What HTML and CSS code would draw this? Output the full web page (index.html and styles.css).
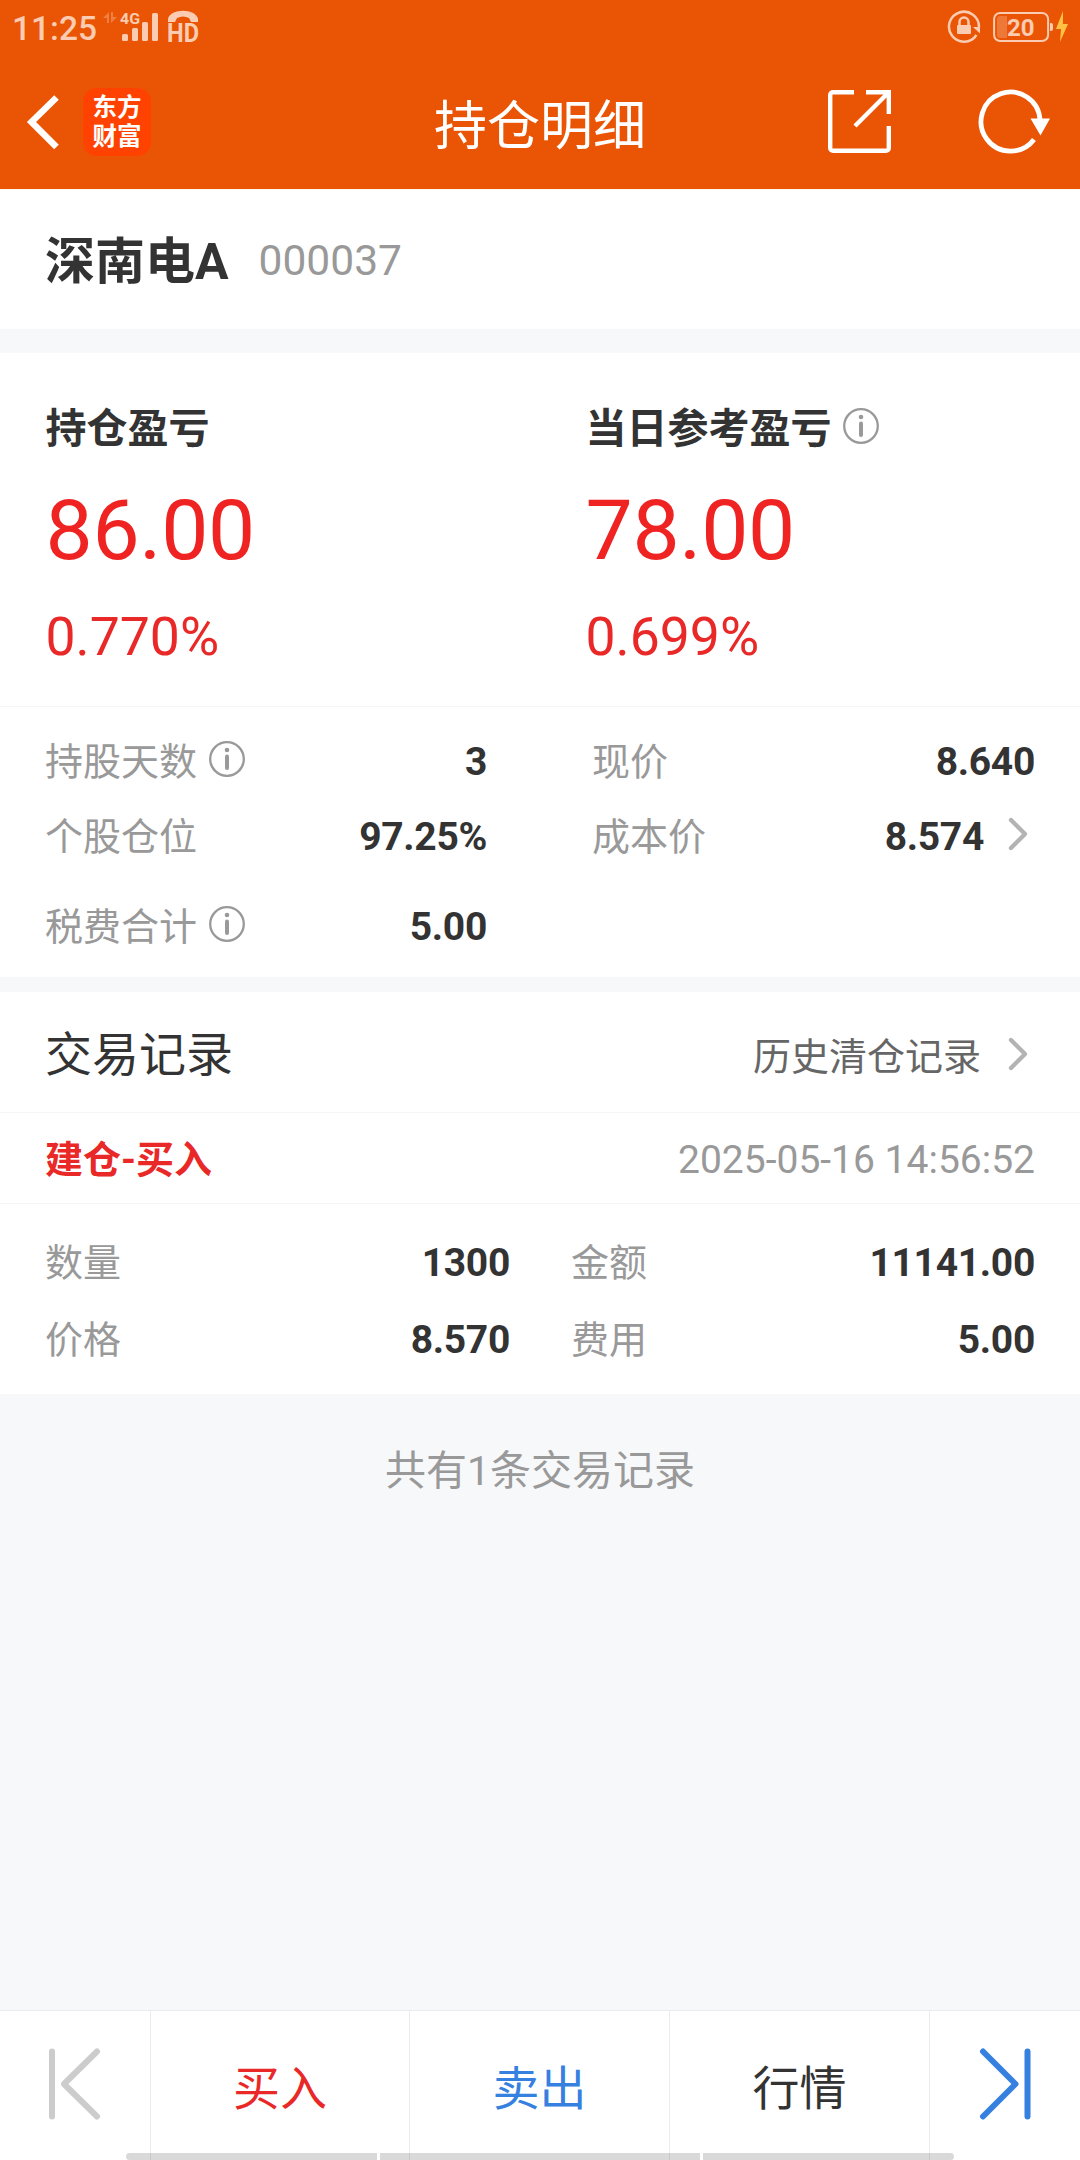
FILE: index.html
```html
<!DOCTYPE html>
<html lang="zh-CN">
<head>
<meta charset="utf-8">
<title>持仓明细</title>
<link rel="stylesheet" href="styles.css">
</head>
<body>
<svg class="defs" width="0" height="0" aria-hidden="true">
  <symbol id="info" viewBox="0 0 36 36">
    <circle cx="18" cy="18" r="16.800" fill="none" stroke="#999" stroke-width="2.300"/>
    <circle cx="18" cy="9" r="2.300" fill="#999"/>
    <path d="M18 15.500V27" stroke="#999" stroke-width="4" stroke-linecap="round"/>
  </symbol>
  <symbol id="chevron" viewBox="0 0 20 34">
    <path d="M3 3 17 17 3 31" fill="none" stroke="#b3b3b3" stroke-width="4.300" stroke-linecap="round" stroke-linejoin="round"/>
  </symbol>
</svg>
<div class="app">
  <header class="top">
    <div class="status">
      <span class="clock">11:25</span>
      <svg class="network" width="98" height="34" viewBox="0 0 98 34" fill="#fbcbb2">
        <path d="M0 8 6 2V13H4V8zM8 2h2v5h4L8 13z" opacity=".35"/>
        <text class="net-label" x="17" y="14" textLength="20" lengthAdjust="spacingAndGlyphs">4G</text>
        <rect x="19" y="24" width="6" height="7" rx="1.500"/>
        <rect x="29" y="18" width="6" height="13" rx="1.500"/>
        <rect x="39" y="12" width="6" height="19" rx="1.500"/>
        <rect x="49" y="3" width="6" height="28" rx="1.500"/>
        <path d="M65 12V9C67-2 93-2 95 9V12H88L86 8C82 6 78 6 74 8L72 12Z"/>
        <text class="hd-label" x="64" y="32" textLength="32" lengthAdjust="spacingAndGlyphs">HD</text>
      </svg>
      <svg class="lock" width="34" height="34" viewBox="0 0 34 34">
        <path d="M29.500 25A15 15 0 1 1 32 17" fill="none" stroke="#fbcbb2" stroke-width="2.500"/>
        <path d="M26 17H33V23.500z" fill="#fbcbb2"/>
        <path d="M12.500 16V12a4.500 4.500 0 0 1 9 0V16" fill="none" stroke="#fbcbb2" stroke-width="2.500"/>
        <rect x="10" y="15" width="14" height="9" rx="1" fill="#fbcbb2"/>
      </svg>
      <svg class="battery" width="76" height="34" viewBox="0 0 76 34">
        <rect x="1.100" y="3" width="54" height="28" rx="6" fill="none" stroke="#fbcbb2" stroke-width="2"/>
        <path d="M14 6V28H7a3 3 0 0 1-3-3V9a3 3 0 0 1 3-3z" fill="#fbcbb2" opacity=".3"/>
        <text class="battery-label" x="14" y="26">20</text>
        <path d="M57 13h1a2 2 0 0 1 2 2v4a2 2 0 0 1-2 2h-1z" fill="#fbcbb2"/>
        <path d="M70 1 63 19h5l-1 13 8-18h-5z" fill="#ffc043"/>
      </svg>
    </div>
    <nav class="nav">
      <div class="nav-left">
        <svg width="36" height="60" viewBox="0 0 36 60"><path d="M32.500 5.500 7.500 30 32.500 55" fill="none" stroke="#fff" stroke-width="6.500"/></svg>
        <div class="logo"><span>东方</span><span>财富</span></div>
      </div>
      <h1 class="nav-title">持仓明细</h1>
      <div class="nav-right">
        <svg width="64" height="64" viewBox="0 0 64 64" fill="none" stroke="#fff" stroke-width="4.400">
          <path d="M26 2.200H5A2.800 2.800 0 0 0 2.200 5V58A2.800 2.800 0 0 0 5 60.800H58A2.800 2.800 0 0 0 60.800 58V36"/>
          <path d="M38 2.200H60.800V24M60 3 27 36"/>
        </svg>
        <svg class="refresh" width="74" height="66" viewBox="0 0 74 66">
          <path d="M56 51.500A29.500 29.500 0 1 1 62 32" fill="none" stroke="#fff" stroke-width="4.800"/>
          <path d="M52.500 30.500H72L62.500 47.500z" fill="#fff"/>
        </svg>
      </div>
    </nav>
  </header>

  <section class="stock">
    <h2 class="stock-name">深南电A</h2>
    <span class="stock-code">000037</span>
  </section>

  <section class="profit">
    <div class="profit-col">
      <div class="profit-title">持仓盈亏</div>
      <div class="profit-amount">86.00</div>
      <div class="profit-rate">0.770%</div>
    </div>
    <div class="profit-col">
      <div class="profit-title">当日参考盈亏<svg class="info" width="36" height="36"><use href="#info"/></svg></div>
      <div class="profit-amount">78.00</div>
      <div class="profit-rate">0.699%</div>
    </div>
  </section>

  <section class="details">
    <div class="row left"><span>持股天数</span><svg class="info" width="36" height="36"><use href="#info"/></svg><b>3</b></div>
    <div class="row right"><span>现价</span><b>8.640</b></div>
    <div class="row left"><span>个股仓位</span><b>97.25%</b></div>
    <div class="row right"><span>成本价</span><b>8.574</b><svg class="chevron" width="20" height="34"><use href="#chevron"/></svg></div>
    <div class="row left last"><span>税费合计</span><svg class="info" width="36" height="36"><use href="#info"/></svg><b>5.00</b></div>
  </section>

  <section class="records">
    <div class="records-head">
      <h2 class="records-title">交易记录</h2>
      <span class="history">历史清仓记录</span>
      <svg class="chevron" width="20" height="34"><use href="#chevron"/></svg>
    </div>
    <div class="trade-head">
      <span class="trade-type">建仓-买入</span>
      <time class="trade-time">2025-05-16 14:56:52</time>
    </div>
    <div class="trade-body">
      <div class="row"><span>数量</span><b>1300</b></div>
      <div class="row"><span>金额</span><b>11141.00</b></div>
      <div class="row"><span>价格</span><b>8.570</b></div>
      <div class="row"><span>费用</span><b>5.00</b></div>
    </div>
  </section>
  <p class="summary">共有1条交易记录</p>

  <footer class="actions">
    <div class="action"><svg width="54" height="72" viewBox="0 0 54 72" fill="none" stroke="#ccc" stroke-width="6" stroke-linecap="round" stroke-linejoin="round"><path d="M4 3.500V68.500M49 3.500 16 36 49 68.500"/></svg></div>
    <div class="action buy"><span>买入</span></div>
    <div class="action sell"><span>卖出</span></div>
    <div class="action"><span>行情</span></div>
    <div class="action"><svg width="54" height="72" viewBox="0 0 54 72" fill="none" stroke="#3680df" stroke-width="6" stroke-linecap="round" stroke-linejoin="round"><path d="M49.500 3.500V68.500M5 3.500 37.500 36 5 68.500"/></svg></div>
    <div class="gesture"><i></i><i></i><i></i></div>
  </footer>
</div>
</body>
</html>
```
FILE: styles.css
```css
* { box-sizing: border-box; }
body {
  margin: 0;
  background: #f7f8fa;
  color: #333;
  font-family: Roboto, "Noto Sans CJK SC", sans-serif;
  line-height: 1.2;
}
h1, h2, p { margin: 0; }
svg { display: block; flex: none; }
.defs { position: absolute; }
.app {
  width: 1080px;
  height: 2160px;
  display: flex;
  flex-direction: column;
  overflow: hidden;
}

.top {
  height: 190px;
  background: #e95504;
  border-bottom: 1px solid #fff9ed;
}
.status {
  height: 54px;
  display: flex;
  align-items: center;
  padding: 0 11px 0 12px;
}
.clock {
  width: 91px;
  padding-top: 3px;
  font-size: 33.500px;
  font-weight: 500;
  line-height: 40px;
  color: #fbcbb2;
}
.network { overflow: visible; }
.net-label { font-size: 15.500px; font-weight: 700; }
.hd-label { font-size: 26px; font-weight: 700; }
.battery-label { font-size: 24px; font-weight: 700; fill: #fbcbb2; }
.lock { margin-left: auto; }
.battery { margin-left: 12px; }
.nav {
  height: 135px;
  display: grid;
  grid-template-columns: 1fr auto 1fr;
  align-items: center;
}
.nav-left { display: flex; align-items: center; padding-left: 24px; }
.logo {
  width: 68px;
  height: 68px;
  margin-left: 23px;
  border-radius: 14px;
  background: #ff4200;
  color: #fff;
  display: flex;
  flex-direction: column;
  align-items: center;
  padding-top: 5px;
  font-size: 24.500px;
  font-weight: 700;
  line-height: 29px;
}
.nav-title {
  padding-top: 11px;
  font-size: 53px;
  font-weight: 400;
  line-height: 60px;
  color: #fff;
}
.nav-right {
  display: flex;
  align-items: center;
  justify-content: flex-end;
  gap: 86px;
  padding-right: 28px;
}
.refresh { margin-bottom: 2px; }

.stock {
  height: 139px;
  display: flex;
  align-items: center;
  padding: 5px 45px 0;
  background: #fff;
}
.stock-name { font-size: 50px; font-weight: 700; line-height: 60px; }
.stock-code { margin: 0 0 2px 30px; font-size: 42.500px; line-height: 50px; color: #999; }

.profit {
  height: 354px;
  margin-top: 24px;
  display: grid;
  grid-template-columns: 1fr 1fr;
  background: #fff;
  border-bottom: 1px solid #f4f5f7;
}
.profit-col { padding: 46px 0 0 45.500px; }
.profit-title {
  display: flex;
  align-items: center;
  font-size: 41px;
  font-weight: 700;
  line-height: 60px;
}
.profit-title .info { margin: 0 0 6px 11.500px; }
.profit-amount { margin-top: 30px; font-size: 84px; letter-spacing: -.3px; line-height: 84px; color: #f02323; }
.profit-rate { margin-top: 34px; font-size: 53.500px; line-height: 60px; color: #e92828; }

.row { display: flex; align-items: center; height: 75px; padding-top: 2px; }
.row span { font-size: 38px; color: #999; }
.row b { margin-left: auto; font-size: 39px; font-weight: 700; letter-spacing: -.3px; }
.row .info { margin: 0 0 8px 12px; }
.row .chevron { margin: 0 7px 8px 24px; }
.details {
  height: 270px;
  display: grid;
  grid-template-columns: 442px 443px;
  grid-template-rows: 75px 75px 90px;
  column-gap: 105px;
  padding: 17px 45px 0;
  background: #fff;
}
.details .last { height: 90px; padding-top: 17px; }

.records { margin-top: 15px; background: #fff; }
.records-head {
  height: 121px;
  display: flex;
  align-items: center;
  padding: 6px 52px 0 45px;
  border-bottom: 1px solid #f4f5f7;
}
.records-title { font-size: 47px; font-weight: 400; }
.history { margin: 6px 0 0 auto; font-size: 38px; color: #666; }
.records-head .chevron { margin: 0 0 2px 27px; }
.trade-head {
  height: 91px;
  display: flex;
  align-items: center;
  justify-content: space-between;
  padding: 5px 45px 0;
  border-bottom: 1px solid #f4f5f7;
}
.trade-type { font-size: 38px; font-weight: 700; color: #e92828; }
.trade-time { font-size: 39px; color: #999; }
.trade-body {
  height: 190px;
  display: grid;
  grid-template-columns: 465px 464px;
  column-gap: 61px;
  grid-auto-rows: 77px;
  align-items: center;
  padding: 20px 45px 0;
}
.summary {
  font-size: 41px;
  line-height: 155px;
  text-align: center;
  color: #999;
}

.actions {
  position: relative;
  height: 150px;
  margin-top: auto;
  display: grid;
  grid-template-columns: 151px 259px 260px 260px 150px;
  background: #fff;
  border-top: 1px solid #e9ecef;
  font-size: 47px;
}
.action {
  display: flex;
  align-items: center;
  justify-content: center;
  padding-bottom: 3px;
  border-right: 1px solid #ececee;
}
.action:nth-child(5) { border-right: 0; }
.action span { padding-top: 10px; }
.buy { color: #e92828; }
.sell { color: #3680df; }
.gesture {
  position: absolute;
  left: 126px;
  bottom: 0;
  width: 828px;
  height: 7px;
  display: grid;
  grid-template-columns: 251px 320px 251px;
  gap: 3px;
  border-radius: 4px;
  overflow: hidden;
}
.gesture i { background: rgba(0, 0, 0, .15); }
```
